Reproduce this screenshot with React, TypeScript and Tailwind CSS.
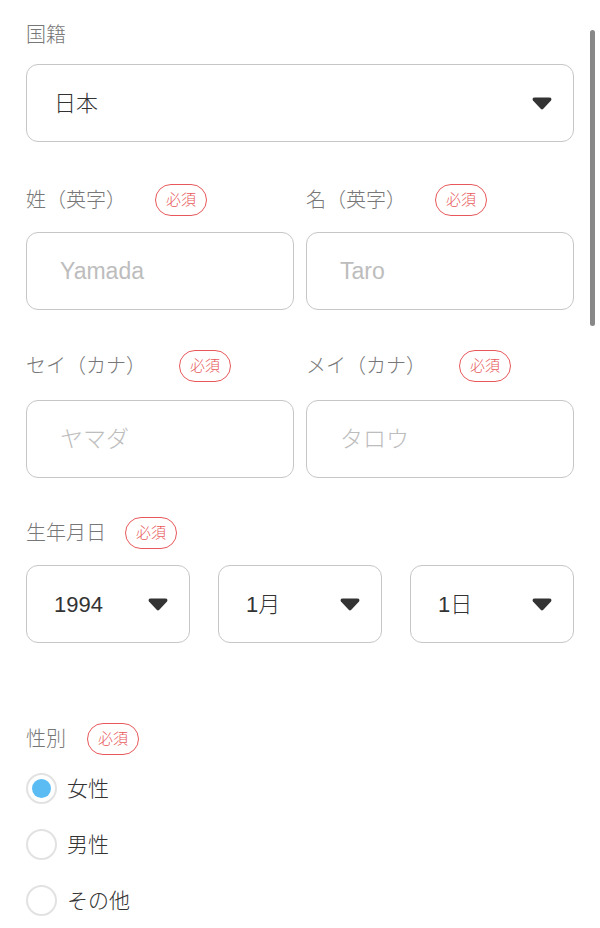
import React from 'react';

const FONT = { fontFamily: '"Liberation Sans", "Noto Sans CJK JP", sans-serif' };

function Caret() {
  return (
    <svg width="20" height="13" viewBox="0 0 20 13" className="shrink-0">
      <path d="M3 0.5 H17 Q20.5 0.5 19 3.5 L11.3 11.8 Q10 13 8.7 11.8 L1 3.5 Q-0.5 0.5 3 0.5 Z" fill="#333333" />
    </svg>
  );
}

function Required() {
  return (
    <span className="inline-flex h-[32px] w-[52px] items-center justify-center rounded-full border-[1.5px] border-[#e8585a] text-[15px] font-light text-[#e8585a]">
      必須
    </span>
  );
}

function Label({ text, required, gap = 'ml-5' }: { text: string; required?: boolean; gap?: string }) {
  return (
    <div className="flex h-[32px] items-center">
      <span className="text-[20px] leading-none font-light text-[#777777]">{text}</span>
      {required && <span className={gap}><Required /></span>}
    </div>
  );
}

function SelectBox({ value }: { value: string }) {
  return (
    <div className="flex h-[78px] items-center justify-between rounded-xl border-[1.5px] border-[#c6c6c6] bg-white pl-[27px] pr-[21px]">
      <span className="text-[22px] font-light text-[#333333]">{value}</span>
      <Caret />
    </div>
  );
}

function TextBox({ placeholder }: { placeholder: string }) {
  return (
    <div className="flex h-[78px] items-center rounded-xl border-[1.5px] border-[#c6c6c6] bg-white pl-[33px]">
      <span className="text-[23px] font-light text-[#bdbdbd]">{placeholder}</span>
    </div>
  );
}

function Radio({ label, checked }: { label: string; checked?: boolean }) {
  return (
    <div className="flex h-[31px] items-center">
      <span className="flex h-[31px] w-[31px] items-center justify-center rounded-full border-2 border-[#e2e2e2] bg-white">
        {checked && <span className="h-[19px] w-[19px] rounded-full bg-[#5bbcf4]" />}
      </span>
      <span className="ml-[10px] text-[21px] font-light text-[#333333]">{label}</span>
    </div>
  );
}

export default function App() {
  return (
    <div className="relative min-h-[928px] w-[600px] bg-white" style={FONT}>
      <div className="px-[26px] pt-[19px]">
        <Label text="国籍" />
        <div className="mt-[13px]">
          <SelectBox value="日本" />
        </div>

        <div className="mt-[42px] grid grid-cols-2 gap-x-[12px]">
          <div>
            <Label text="姓（英字）" required gap="ml-[29px]" />
            <div className="mt-[16px]"><TextBox placeholder="Yamada" /></div>
          </div>
          <div>
            <Label text="名（英字）" required gap="ml-[29px]" />
            <div className="mt-[16px]"><TextBox placeholder="Taro" /></div>
          </div>
        </div>

        <div className="mt-[40px] grid grid-cols-2 gap-x-[12px]">
          <div>
            <Label text="セイ（カナ）" required gap="ml-[33px]" />
            <div className="mt-[18px]"><TextBox placeholder="ヤマダ" /></div>
          </div>
          <div>
            <Label text="メイ（カナ）" required gap="ml-[33px]" />
            <div className="mt-[18px]"><TextBox placeholder="タロウ" /></div>
          </div>
        </div>

        <div className="mt-[39px]">
          <Label text="生年月日" required gap="ml-[19px]" />
          <div className="mt-[16px] grid grid-cols-3 gap-x-[28px]">
            <SelectBox value="1994" />
            <SelectBox value="1月" />
            <SelectBox value="1日" />
          </div>
        </div>

        <div className="mt-[80px]">
          <Label text="性別" required gap="ml-[21px]" />
          <div className="mt-[18px] flex flex-col gap-[25px]">
            <Radio label="女性" checked />
            <Radio label="男性" />
            <Radio label="その他" />
          </div>
        </div>
      </div>

      <div className="absolute right-[5px] top-[30px] h-[296px] w-[5px] rounded-full bg-[#888888]" />
    </div>
  );
}
